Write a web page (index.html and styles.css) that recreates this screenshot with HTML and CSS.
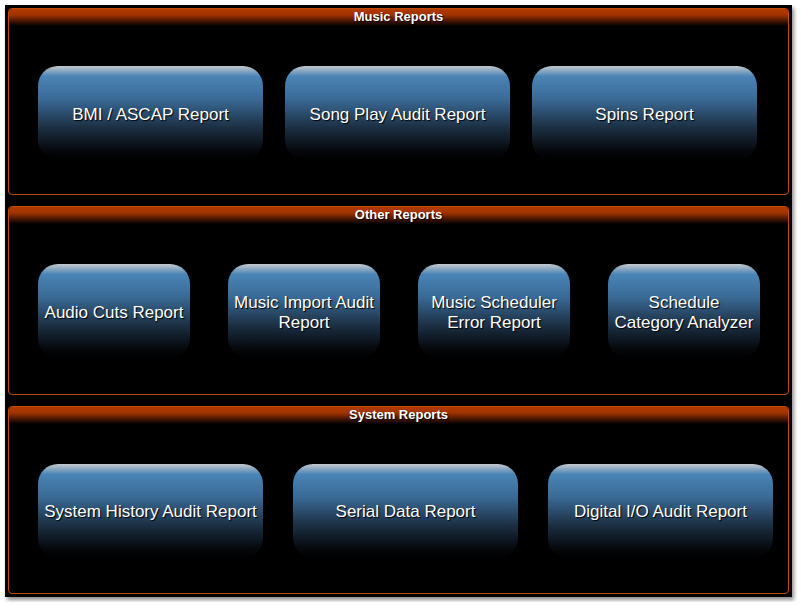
FILE: index.html
```html
<!DOCTYPE html>
<html>
    <head>
        <meta charset="utf-8">
        <link rel="stylesheet" href="styles.css">
        <title>Reports</title>
    </head>
    <body>
        <div id="frame">
            <div class="panel">
                <div class="title">Music Reports</div>
                <div class="row music">
                    <button class="report wide">BMI / ASCAP Report</button>
                    <button class="report wide">Song Play Audit Report</button>
                    <button class="report wide">Spins Report</button>
                </div>
            </div>
            <div class="panel">
                <div class="title">Other Reports</div>
                <div class="row other">
                    <button class="report narrow">Audio Cuts Report</button>
                    <button class="report narrow">Music Import Audit<br>Report</button>
                    <button class="report narrow">Music Scheduler<br>Error Report</button>
                    <button class="report narrow">Schedule<br>Category Analyzer</button>
                </div>
            </div>
            <div class="panel">
                <div class="title">System Reports</div>
                <div class="row system">
                    <button class="report wide">System History Audit Report</button>
                    <button class="report wide">Serial Data Report</button>
                    <button class="report wide">Digital I/O Audit Report</button>
                </div>
            </div>
        </div>
    </body>
</html>
```

FILE: styles.css
```css
body {
    margin: 0;
    padding: 0;
    background-color: #fff;
    font-family: "Liberation Sans", Arial, sans-serif;
}

#frame {
    margin: 5px;
    width: 781px;
    height: 586px;
    padding: 3px;
    background-color: #000;
    box-shadow: 2px 3px 4px rgba(0, 0, 0, 0.45);
    display: flex;
    flex-direction: column;
    gap: 11px;
}

.panel {
    height: 186px;
    border: 1px solid #c04a08;
    border-radius: 4px;
    overflow: hidden;
}

.panel + .panel {
    height: 187px;
}

.title {
    height: 17px;
    line-height: 15px;
    text-align: center;
    color: #fff;
    font-weight: bold;
    font-size: 13px;
    text-shadow: 1px 1px 1px #000;
    background: linear-gradient(to bottom, #b23a00 0%, #a03200 35%, #000 100%);
}

.row {
    display: flex;
    padding: 40px 0 0 29px;
}

.music {
    gap: 22px;
}

.other {
    gap: 38px;
}

.system {
    gap: 30px;
}

.report {
    height: 94px;
    border: none;
    border-radius: 20px;
    padding: 3px 0 0 0;
    color: #fff;
    white-space: nowrap;
    font-family: "Liberation Sans", Arial, sans-serif;
    font-size: 17px;
    line-height: 20px;
    text-shadow: 1px 1px 1px #000;
    background: linear-gradient(to bottom, #c4c8cc 0%, #4a84b6 11%, #3a6a96 35%, #1c3044 65%, #05080c 90%, #000 100%);
}

.wide {
    width: 225px;
}

.narrow {
    width: 152px;
}
```
